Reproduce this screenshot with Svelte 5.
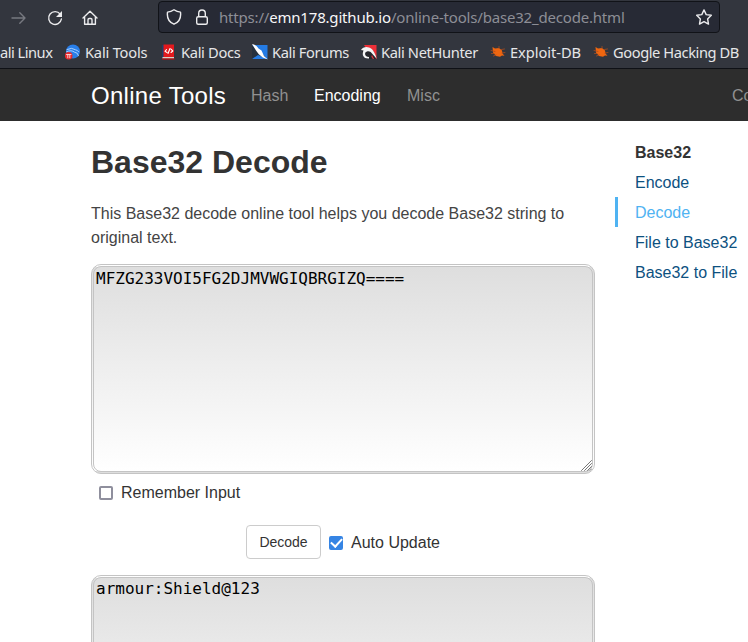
<script>
  let input = $state('MFZG233VOI5FG2DJMVWGIQBRGIZQ====');
  let output = $state('armour:Shield@123');
  let remember = $state(false);
  let autoUpdate = $state(true);

  const bookmarks = [
    { label: 'Kali Tools', icon: 'tools', tracking: -0.2 },
    { label: 'Kali Docs', icon: 'docs', tracking: -0.33 },
    { label: 'Kali Forums', icon: 'forums', tracking: -0.36 },
    { label: 'Kali NetHunter', icon: 'nethunter', tracking: -0.36 },
    { label: 'Exploit-DB', icon: 'bug', tracking: -0.05 },
    { label: 'Google Hacking DB', icon: 'bug', tracking: -0.42 }
  ];
  const links = ['Encode', 'Decode', 'File to Base32', 'Base32 to File'];
</script>

<div class="window">
  <header class="chrome">
    <div class="toolbar">
      <div class="controls">
        <svg class="muted" width="16" height="16" viewBox="0 0 16 16"><path d="M1 8h13M8.800 2.800 14 8l-5.200 5.200" /></svg>
        <svg width="16" height="16" viewBox="0 0 16 16"><path d="M13.200 4.200A6.400 6.400 0 1 0 14.400 9" /><path class="solid" d="M15 1v6H9z" /></svg>
        <svg class="home" width="16" height="16" viewBox="0 0 16 16"><path d="M1 8 8 1.300 15 8M2.600 7v7.200h10.800V7M6 14V9.700Q6 8.500 7.200 8.500h1.600q1.200 0 1.200 1.200V14" /></svg>
      </div>
      <div class="address">
        <svg width="16" height="16" viewBox="0 0 16 16"><path d="M8 .8C6.200 2.100 3.800 3 1.500 3.100c-.7 5.500 1.300 10 6.500 12.100 5.200-2.100 7.200-6.600 6.500-12.100C12.200 3 9.800 2.100 8 .8z" /></svg>
        <svg class="lock" width="14" height="16" viewBox="0 0 14 16"><rect x="1.700" y="7.700" width="10.600" height="7.500" rx="1.500" /><path d="M3.700 7.500V4.300a3.300 3.300 0 0 1 6.600 0v3.200" /></svg>
        <span class="url">https://<b>emn178.github.io</b>/online-tools/base32_decode.html</span>
        <svg class="star" width="16" height="16" viewBox="0 0 16 16"><path d="m8 .9 2.200 4.700 5.100.7-3.700 3.600.9 5.200L8 12.600l-4.500 2.500.9-5.200L.7 6.300l5.100-.7z" /></svg>
      </div>
    </div>
    <nav class="bookmarks">
      <span class="bookmark first">ali Linux</span>
      {#each bookmarks as item}
        <span class="bookmark" style:letter-spacing="{item.tracking}px">
          <svg class="favicon" width="16" height="16" viewBox="0 0 16 16">
            {#if item.icon === 'tools'}
              <circle cx="8" cy="7.500" r="7" fill="#287ee9" />
              <path d="M2 5.500q5-2.500 8.500.3 2 .2 3.200 2M1.500 7.800q5-2.300 8 .4 3.200 0 4 3.500" stroke="#b7d8ff" stroke-width=".9" fill="none" />
              <circle cx="3.700" cy="11.700" r="3.800" fill="#e6292d" />
              <path d="M1.500 10.500h4.500M2.800 10.800v3M4.800 10.800v3" stroke="#ffd9d9" stroke-width=".9" fill="none" />
            {:else if item.icon === 'docs'}
              <path d="M0 1h3v14H0z" fill="#203d6b" /><path d="M1.500.5H12v12.500H1.500z" fill="#e3191d" />
              <path d="M.5 13H12v2H.5z" fill="#d8d2ca" /><path d="M.5 15H12" stroke="#a11518" />
              <path d="m4.500 5.500-1.500 1.800 2 1.200M9 5.200l1.800 1.800L9 8.500M8 4.500 6 9.500" stroke="#fff" stroke-width="1.100" fill="none" />
            {:else if item.icon === 'forums'}
              <path d="M0 1h15.500v14H0z" fill="#247be4" />
              <path d="M0 1 9 8l5 6-8-3-6 4z" fill="#25303e" />
              <path d="M0 0c2 .2 5 2 6.500 4.500l3 2L12 12l3.800 3.500-5-2-4-3.300L4 6.500z" fill="#fff" />
            {:else if item.icon === 'nethunter'}
              <path d="M3 1h12.500v14H12z" fill="#ed3038" />
              <path d="M1 7c0-2.500 3-4 6-3 4 .5 6 3 7 7l1 4h-2l-2-4-1 2 1 2H4l3-1c-4-.5-6-3.500-6-7z" fill="#25262b" />
              <path d="M0 6c1.500-2.500 5-4 8-2.500 3.500 1 6 5 7.500 11L11 9.500C9.500 7.500 8 7 6 7.500c-3 .5-2.500 5.500 2 5.500v1.500C2.500 15 .5 11 2.500 6.500z" fill="#f5f5f5" />
            {:else}
              <path d="M2.500 3 5 4.500l4-.5 3 2.500.5 3 2 2.300-2.500-.3-2 1.300-4-.8L3 8.500z" fill="#ef6610" />
              <path d="m1 6.500 4 1M1.500 9.500H4m5-7v2m2.500 1 3-.5M6 11l-2.500 1M12 9l3-.5" stroke="#a94c20" stroke-width=".8" fill="none" />
            {/if}
          </svg>
          {item.label}
        </span>
      {/each}
    </nav>
  </header>

  <nav class="site-nav">
    <span class="brand">Online Tools</span>
    <span class="hash">Hash</span>
    <span class="current">Encoding</span>
    <span class="misc">Misc</span>
    <span>Contact</span>
  </nav>

  <div class="content">
    <main>
      <h1>Base32 Decode</h1>
      <p>This Base32 decode online tool helps you decode Base32 string to original text.</p>
      <div class="field">
        <textarea bind:value={input} spellcheck="false" aria-label="Input"></textarea>
        <svg class="grip" width="11" height="11" viewBox="0 0 11 11"><path d="M.5 10.500l10-10M3.500 10.500l7-7M6.500 10.500l4-4M9 10.500 10.500 9" /></svg>
      </div>
      <label class="remember"><input type="checkbox" bind:checked={remember} />Remember Input</label>
      <div class="actions">
        <button>Decode</button>
        <label class="auto"><input type="checkbox" bind:checked={autoUpdate} />Auto Update</label>
      </div>
      <textarea class="output" bind:value={output} spellcheck="false" aria-label="Output"></textarea>
    </main>
    <aside>
      <strong>Base32</strong>
      {#each links as link}
        <a href="#{link}" class:active={link === 'Decode'}>{link}</a>
      {/each}
    </aside>
  </div>
</div>

<style>
  :global(body) { margin: 0; overflow: hidden; }
  * { box-sizing: border-box; }
  .window {
    width: 748px; height: 642px; overflow: hidden; background: #fff; color: #333;
    font: 16px/24px "Liberation Sans", Arial, sans-serif;
  }
  .chrome {
    height: 69px; background: #33363e; border-bottom: 1px solid #0f1116;
    color: #e6e6e8; font-family: "Noto Sans", sans-serif; white-space: nowrap;
  }
  svg { flex: none; display: block; fill: none; stroke: #ececee; stroke-width: 1.400; stroke-linejoin: round; stroke-linecap: round; }
  .solid { fill: #ececee; stroke: none; }
  .muted { stroke: #777980; }
  .toolbar { display: flex; height: 35px; padding-top: 1px; }
  .controls { width: 158px; height: 33px; padding-left: 11px; display: flex; align-items: center; gap: 20px; }
  .home { margin-left: -1px; }
  .address {
    width: 562px; height: 32px; padding: 0 7px; display: flex; align-items: center;
    background: #272a35; border: 1px solid #111318; border-radius: 4px;
  }
  .lock { margin-left: 13px; }
  .url { margin-left: 10px; color: #8d8e96; font-size: 15px; line-height: 24px; letter-spacing: -.19px; }
  .url b { font-weight: 400; color: #f7f7f8; }
  .star { margin-left: auto; }
  .bookmarks {
    height: 33px; display: grid; grid-template-columns: 65px 97px 90px 109px 129px 103px 155px;
    align-items: center; font-size: 14.670px;
  }
  .bookmark { display: flex; align-items: center; gap: 4px; line-height: 22px; height: 26px; }
  .first { letter-spacing: -.5px; }
  .bookmark:nth-child(3) { gap: 3px; }
  .favicon { stroke: none; }
  .site-nav {
    height: 52px; padding: 2px 0 0 91px; background: #2d2d2d; color: #919191;
    display: flex; align-items: center; white-space: nowrap;
  }
  .site-nav span { flex: none; }
  .site-nav .brand { width: 160px; color: #fff; font-size: 24px; letter-spacing: .29px; }
  .site-nav .hash { width: 63px; }
  .site-nav .current { width: 93px; color: #fff; }
  .site-nav .misc { width: 325px; }
  .content { display: flex; padding-left: 91px; }
  main { width: 504px; }
  h1 { margin: 22px 0 0; font-size: 32px; line-height: 38px; font-weight: 700; }
  p { margin: 21px 0 14px; color: #444; }
  .field { position: relative; height: 210px; }
  textarea {
    display: block; width: 504px; height: 210px; margin: 0; padding: 2px; resize: none; outline: 0;
    border: 3px double #c4c4c4; border-radius: 10px; color: #000;
    background: linear-gradient(#dedede, #fff);
    font: 16px/19px "DejaVu Sans Mono", monospace;
  }
  .output { padding-top: 1px; }
  .grip { position: absolute; right: 3px; bottom: 3px; stroke: #777; stroke-width: 1; }
  label { display: flex; align-items: center; gap: 8px; }
  .remember { margin: 7px 0 0 8px; }
  input {
    appearance: none; width: 14px; height: 14px; margin: 0; display: grid; place-items: center;
    border: 2px solid #8f8f9d; border-radius: 2px; background: #fff;
  }
  input:checked { background: #3584e4; border-color: #3584e4; }
  input:checked::after {
    content: ''; width: 9px; height: 5px; margin-top: -3px;
    border: solid #fff; border-width: 0 0 2px 2px; transform: rotate(-47deg);
  }
  .actions { display: flex; justify-content: center; align-items: center; gap: 8px; height: 34px; margin: 20px 0 16px; }
  .auto { padding-top: 2px; }
  button {
    width: 75px; height: 34px; padding: 0; border: 1px solid #ccc; border-radius: 4px;
    background: #fff; color: #333; font: 14px/20px "Liberation Sans", Arial, sans-serif;
  }
  aside { margin: 16px 0 0 20px; display: flex; flex-direction: column; white-space: nowrap; }
  strong, a { height: 30px; line-height: 28px; padding: 2px 0 0 17px; border-left: 3px solid transparent; }
  a { color: #0d517f; text-decoration: none; }
  a.active { color: #4fb3f2; border-color: #4fb3f2; }
</style>
